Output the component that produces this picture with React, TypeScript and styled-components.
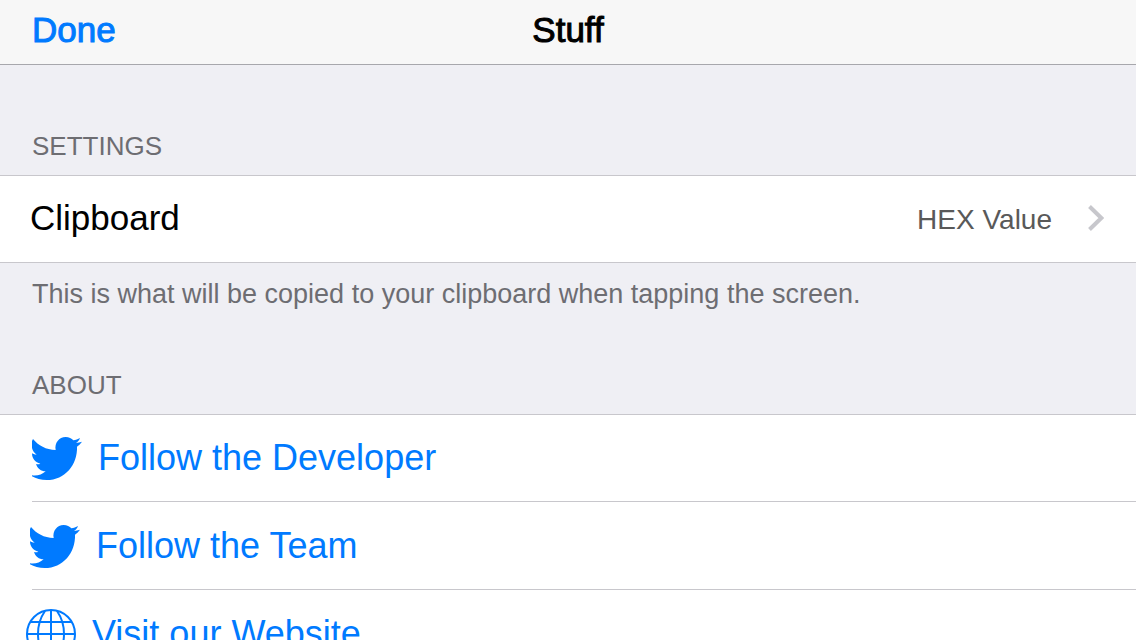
import React from "react";
import styled, { createGlobalStyle } from "styled-components";

const GlobalStyle = createGlobalStyle`
  * { box-sizing: border-box; }
  html, body, #root { height: 100%; }
  body {
    margin: 0;
    background: #efeff4;
    color: #000;
    font-family: "Liberation Sans", Helvetica, Arial, sans-serif;
  }
`;

const Screen = styled.div`
  height: 100%;
  display: flex;
  flex-direction: column;
  overflow: hidden;
`;

const NavBar = styled.header`
  display: grid;
  grid-template-columns: 1fr auto 1fr;
  align-items: center;
  flex: none;
  height: 65px;
  padding: 0 32px 4px;
  background: #f7f7f7;
  border-bottom: 1px solid #a7a7ac;
`;

/* Medium weight: the regular face thickened by a one-pixel outline. */
const NavButton = styled.button`
  justify-self: start;
  padding: 0;
  border: 0;
  background: none;
  color: #007aff;
  font: 35px/40px "Liberation Sans", Helvetica, Arial, sans-serif;
  -webkit-text-stroke: 1px currentColor;
  cursor: pointer;
`;

const NavTitle = styled.h1`
  margin: 0;
  font-size: 35px;
  line-height: 40px;
  font-weight: normal;
  -webkit-text-stroke: 1px currentColor;
`;

const Content = styled.main`
  flex: 1;
  min-height: 0;
  overflow: hidden;
`;

const SectionTitle = styled.h2<{ $first?: boolean }>`
  margin: 0;
  padding: ${(p) => (p.$first ? 66 : 60)}px 32px 14px;
  color: #6d6d72;
  font-size: 26px;
  line-height: 30px;
  font-weight: normal;
  text-transform: uppercase;
`;

const Group = styled.div`
  background: #fff;
  border-top: 1px solid #c8c7cc;
  border-bottom: 1px solid #c8c7cc;
`;

const SettingRow = styled.button`
  display: flex;
  align-items: center;
  width: 100%;
  height: 86px;
  padding: 0 32px 2px 30px;
  border: 0;
  background: none;
  color: #000;
  font: 35px/40px "Liberation Sans", Helvetica, Arial, sans-serif;
  text-align: left;
  cursor: pointer;
`;

const RowValue = styled.span`
  margin-left: auto;
  margin-right: 36px;
  padding-top: 3px;
  color: #595959;
  font-size: 28px;
`;

const Footnote = styled.p`
  margin: 0;
  padding: 16px 32px 0;
  color: #6d6d72;
  font-size: 27px;
  line-height: 31px;
`;

const LinkList = styled.ul`
  margin: 0;
  padding: 0;
  list-style: none;
`;

const LinkItem = styled.li`
  &:not(:last-child)::after {
    content: "";
    display: block;
    height: 1px;
    margin-left: 32px;
    background: #c8c7cc;
  }
`;

const RowLink = styled.a<{ $inset: number; $first: boolean }>`
  display: flex;
  align-items: center;
  gap: 16px;
  height: ${(p) => (p.$first ? 86 : 87)}px;
  padding-left: ${(p) => p.$inset}px;
  color: #007aff;
  font-size: 36px;
  line-height: 42px;
  text-decoration: none;
`;

const Chevron = () => (
  <svg width="16" height="26" viewBox="0 0 16 26" fill="none" aria-hidden="true">
    <path d="M1.5 1.5 13.3 13 1.5 24.5" stroke="#c7c7cc" strokeWidth="4" />
  </svg>
);

const Bird = () => (
  <svg width="50" height="46" viewBox="0 -6 150 138" fill="currentColor" aria-hidden="true">
    <path d="M3 6C19 26 42 38 71 39C67 18 81 0 101 0C111 0 119 4 124 10C131 9 138 6 144 3C142 9 138 14 132 18C138 17 144 16 150 14C146 20 141 25 135 29C137 83 99 129 44 129C27 129 12 125 0 118V115C16 117 30 113 41 103C27 103 16 94 12 81C17 82 21 82 25 80C10 77 0 65 0 49C4 51 9 53 14 53C7 48 2 41 0 33V12C1 10 2 8 3 6Z" />
  </svg>
);

const Globe = () => (
  <svg width="50" height="50" viewBox="0 0 50 50" fill="none" stroke="currentColor" strokeWidth="2" aria-hidden="true">
    <circle cx="25" cy="25" r="24" />
    <path d="M25 1v48M5 13h40M1 25h48M5 37h40" />
    <path d="M19 2Q12 12 12 25T19 48M31 2Q38 12 38 25T31 48" />
  </svg>
);

const links = [
  { label: "Follow the Developer", inset: 32, Icon: Bird },
  { label: "Follow the Team", inset: 30, Icon: Bird },
  { label: "Visit our Website", inset: 26, Icon: Globe },
];

export default function App() {
  return (
    <Screen>
      <GlobalStyle />
      <NavBar>
        <NavButton type="button">Done</NavButton>
        <NavTitle>Stuff</NavTitle>
      </NavBar>
      <Content>
        <SectionTitle $first>Settings</SectionTitle>
        <Group>
          <SettingRow type="button">
            Clipboard
            <RowValue>HEX Value</RowValue>
            <Chevron />
          </SettingRow>
        </Group>
        <Footnote>This is what will be copied to your clipboard when tapping the screen.</Footnote>
        <SectionTitle>About</SectionTitle>
        <Group>
          <LinkList>
            {links.map(({ label, inset, Icon }, i) => (
              <LinkItem key={label}>
                <RowLink href="#" $inset={inset} $first={i === 0}>
                  <Icon />
                  {label}
                </RowLink>
              </LinkItem>
            ))}
          </LinkList>
        </Group>
      </Content>
    </Screen>
  );
}
